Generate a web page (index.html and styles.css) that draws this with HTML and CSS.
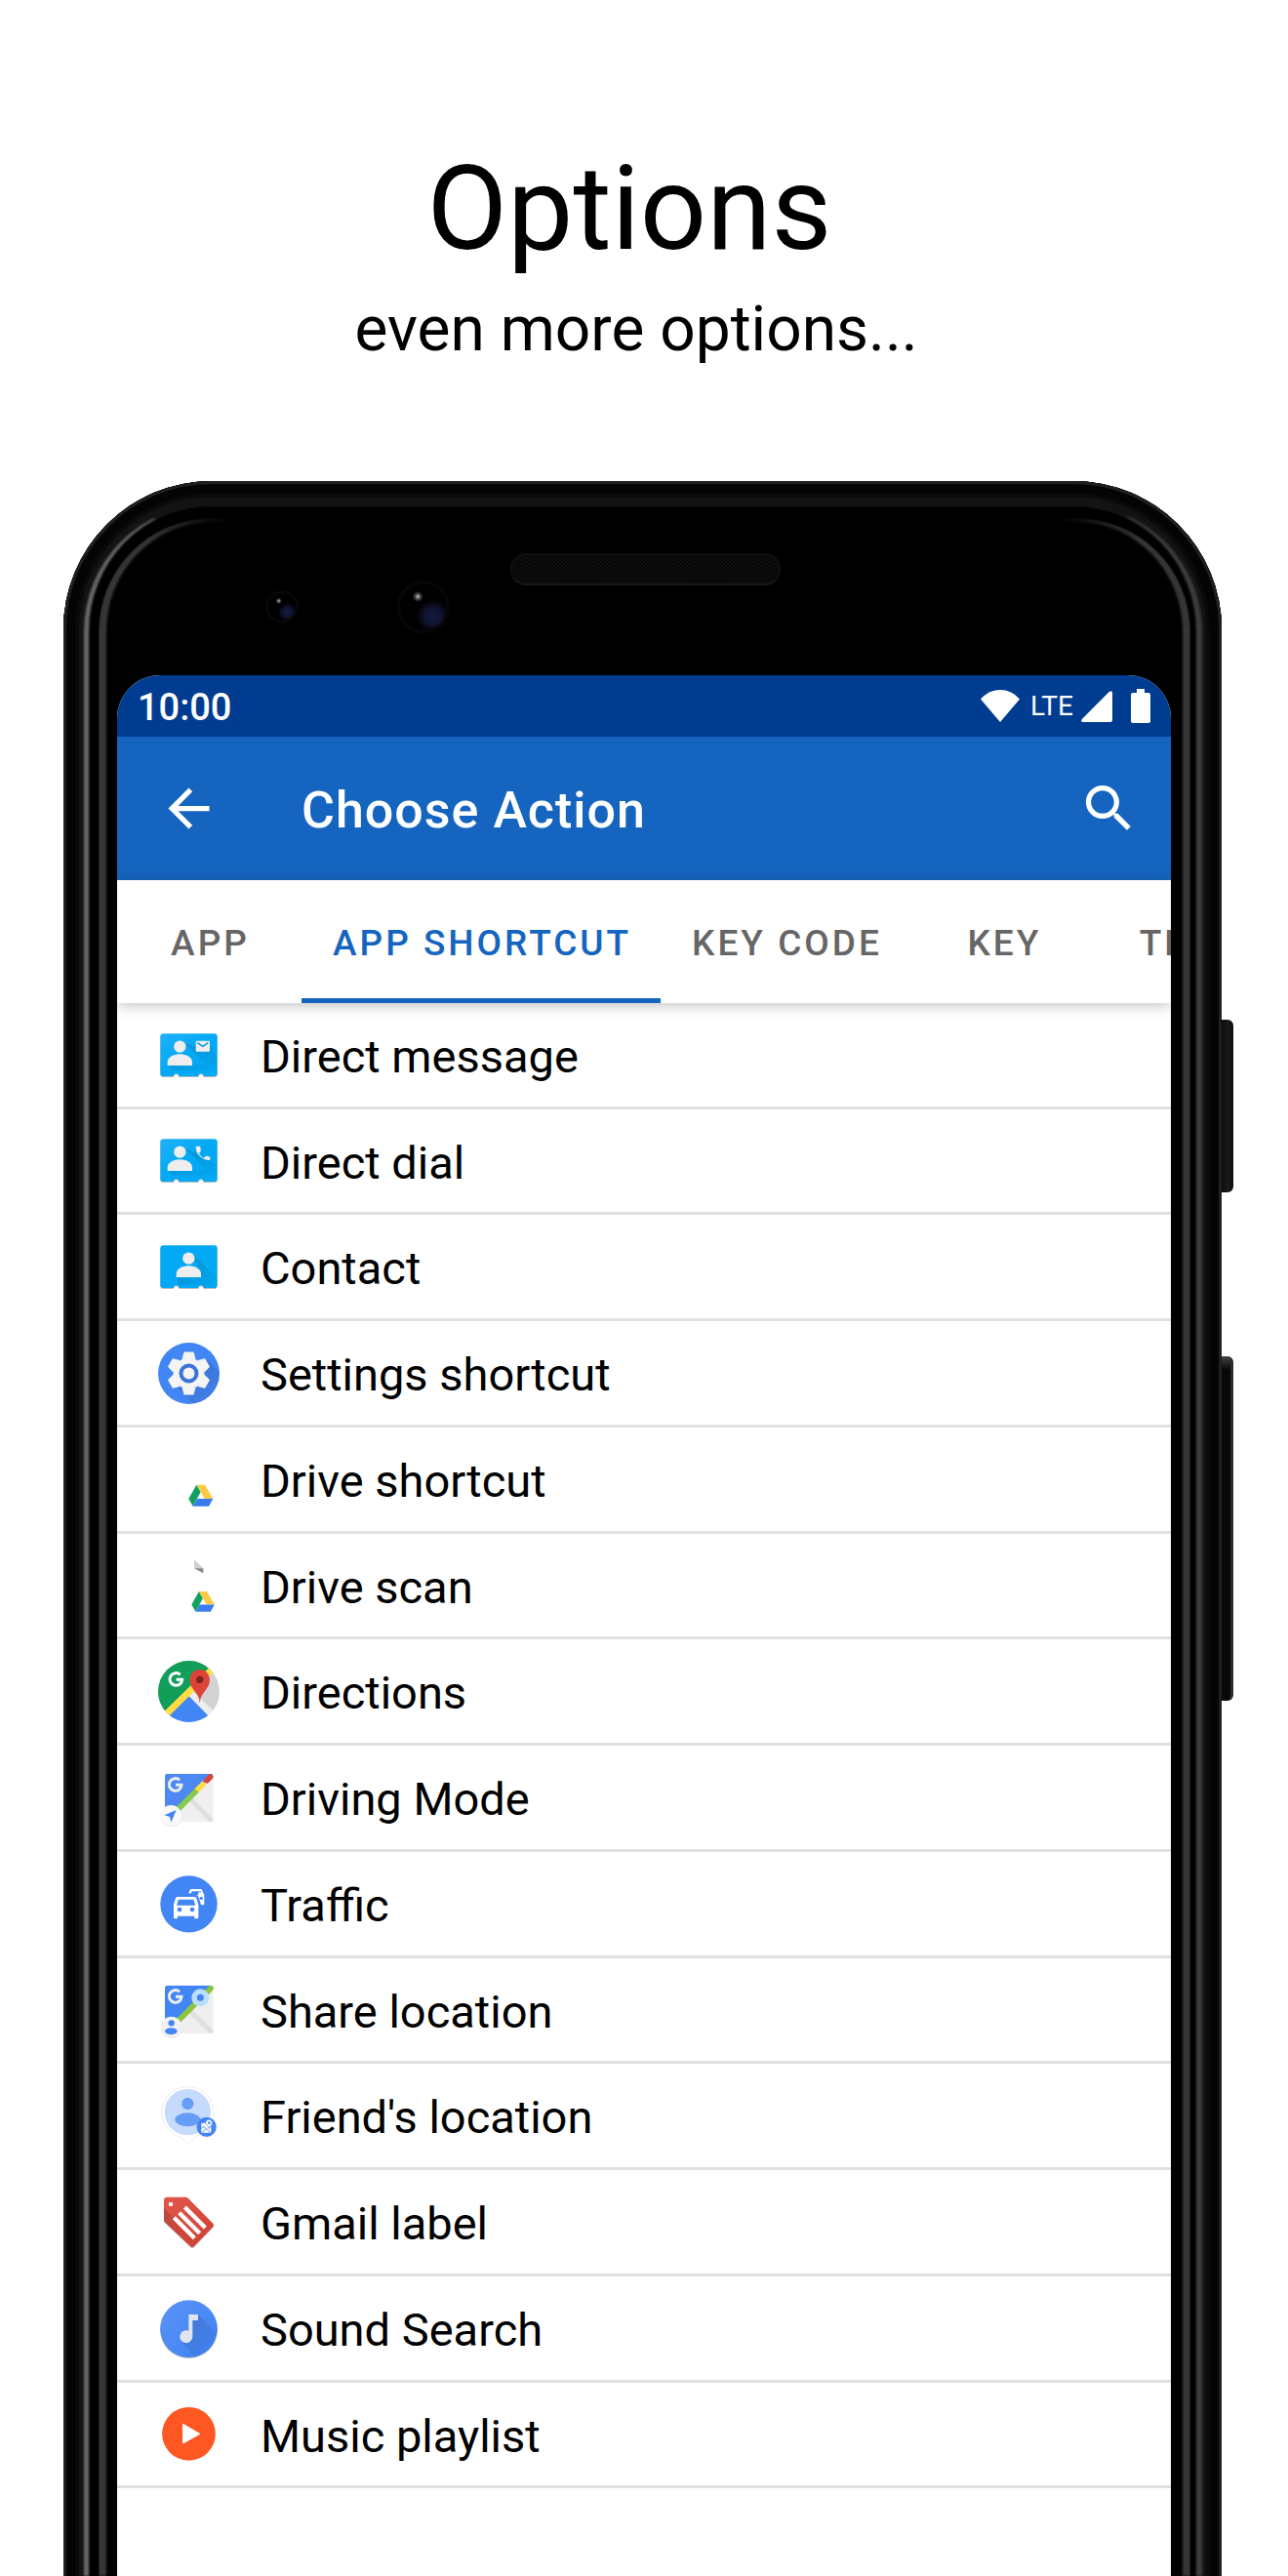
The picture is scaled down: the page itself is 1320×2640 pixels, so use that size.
FILE: index.html
```html
<!DOCTYPE html>
<html lang="en">
<head>
<meta charset="utf-8">
<meta name="viewport" content="width=device-width, initial-scale=1">
<title>Choose Action</title>
<link rel="stylesheet" href="styles.css">
</head>
<body>
<svg class="defs" aria-hidden="true">
  <defs>
    <linearGradient id="card" x1="0" y1="0" x2="1" y2="1"><stop offset="0" stop-color="#20b1f8"/><stop offset=".5" stop-color="#03a9f4"/></linearGradient>
    <linearGradient id="sound" x1="0" y1="0" x2="1" y2="1"><stop offset="0" stop-color="#5c94f8"/><stop offset="1" stop-color="#3d80f2"/></linearGradient>
    <linearGradient id="tag" x1="0" y1="0" x2="1" y2="1"><stop offset="0" stop-color="#e0594c"/><stop offset="1" stop-color="#d23f31"/></linearGradient>
    <linearGradient id="fade" x1="0" y1="0" x2="1" y2="1"><stop offset="0" stop-color="#000" stop-opacity=".16"/><stop offset="1" stop-color="#000" stop-opacity="0"/></linearGradient>
    <clipPath id="round"><circle cx="94.500" cy="94.500" r="94.500"/></clipPath>
    <clipPath id="square"><rect x="21" y="20" width="149" height="149" rx="9"/></clipPath>
    <path id="card-shape" d="M16 28H173q9 0 9 9V150q0 9-9 9H140a8 8 0 0 0-16 0H64a8 8 0 0 0-16 0H16q-9 0-9-9V37q0-9 9-9Z"/>
    <g id="person"><circle cx="0" cy="-36" r="18.500"/><path d="M-38 22V10C-36-6-16-13 0-13S36-6 38 10V22Z"/></g>
    <path id="g" d="M13-13A19 19 0 1 0 19 2H1" fill="none" stroke-width="9"/>
    <path id="tooth" d="M-21-44L-15-65Q-14-66-12-66H12Q14-66 15-65L21-44Z"/>
    <g id="drive"><path fill="#11a05e" d="M24 0L37 22L13 66L0 43Z"/><path fill="#fdca47" d="M24 0H50L75 43H49Z"/><path fill="#3a7cf0" d="M13 66L26 43H75L62 66Z"/></g>
  </defs>
</svg>

<header class="intro">
  <h1 class="intro-title">Options</h1>
  <p class="intro-text">even more options...</p>
</header>

<main class="phone">
  <span class="frame"></span>
  <span class="rim rim-outer"></span>
  <span class="rim rim-inner"></span>
  <span class="key key-power"></span>
  <span class="key key-volume"></span>

  <div class="bezel">
    <div class="cameras"><span class="camera camera-small"></span><span class="camera"></span></div>
    <span class="speaker"></span>
  </div>

  <div class="screen">
    <div class="status">
      <time class="clock">10:00</time>
      <div class="signals">
        <svg class="wifi" width="40" height="33" viewBox="0 0 40 33" fill="#fff" aria-hidden="true"><path d="M20 33L0 9.500Q8 0 20 0T40 9.500Z"/></svg>
        <span class="network">LTE</span>
        <svg class="bars" width="32" height="32" viewBox="0 0 32 32" fill="#fff" aria-hidden="true"><path d="M29 .8Q32-1 32 2V30Q32 32 30 32H2Q-1 32 .8 29Z"/></svg>
        <svg width="20" height="35" viewBox="0 0 20 35" fill="#fff" aria-hidden="true"><path d="M6 0H14V4H18Q20 4 20 6V33Q20 35 18 35H2Q0 35 0 33V6Q0 4 2 4H6Z"/></svg>
      </div>
    </div>

    <div class="appbar">
      <button class="icon-button" type="button" aria-label="Back"><svg viewBox="0 0 24 24" fill="#fff"><path d="M20 11H7.830l5.590-5.590L12 4l-8 8 8 8 1.410-1.410L7.830 13H20v-2z"/></svg></button>
      <h2 class="appbar-title">Choose Action</h2>
      <button class="icon-button" type="button" aria-label="Search"><svg viewBox="0 0 24 24" fill="#fff"><path d="M15.500 14h-.79l-.28-.27C15.410 12.590 16 11.110 16 9.500 16 5.910 13.090 3 9.500 3S3 5.910 3 9.500 5.910 16 9.500 16c1.610 0 3.090-.59 4.230-1.570l.27.28v.79l5 4.990L20.490 19l-4.990-5zm-6 0C7.010 14 5 11.990 5 9.500S7.010 5 9.500 5 14 7.010 14 9.500 11.990 14 9.500 14z"/></svg></button>
    </div>

    <nav class="tabs">
      <button class="tab" type="button">APP</button>
      <button class="tab tab-active" type="button">APP SHORTCUT</button>
      <button class="tab" type="button">KEY CODE</button>
      <button class="tab" type="button">KEY</button>
      <button class="tab" type="button">TEXT</button>
    </nav>

    <ul class="actions">
      <li class="action"><button class="row" type="button">
        <svg class="icon" viewBox="0 0 189 189" aria-hidden="true"><use href="#card-shape" y="3" fill="#bbb"/><use href="#card-shape" fill="url(#card)"/><path fill="url(#fade)" d="M82 56L150 124H30L45 140H150L182 145V110L158 60V83Z"/><use href="#person" x="67" y="104" fill="#eee"/><rect x="116" y="50" width="43" height="33" rx="3" fill="#eee"/><path d="M121 56L137.500 67L154 56" fill="none" stroke="#0a9be0" stroke-width="5"/></svg>
        <span class="label">Direct message</span></button></li>
      <li class="action"><button class="row" type="button">
        <svg class="icon" viewBox="0 0 189 189" aria-hidden="true"><use href="#card-shape" y="3" fill="#bbb"/><use href="#card-shape" fill="url(#card)"/><path fill="url(#fade)" d="M82 56L150 124H30L45 140H150L182 145V110L158 90Z"/><use href="#person" x="67" y="104" fill="#eee"/><path fill="#eee" d="M119 50H128Q130 50 130 52C130 57 131 60 132 63L131 66L126 71C130 78 135 83 141 86L146 81L149 80Q154 82 158 82Q160 82 160 84V91Q160 93 158 93C136 93 116 73 116 53Q116 50 119 50Z"/></svg>
        <span class="label">Direct dial</span></button></li>
      <li class="action"><button class="row" type="button">
        <svg class="icon" viewBox="0 0 189 189" aria-hidden="true"><use href="#card-shape" y="3" fill="#bbb"/><use href="#card-shape" fill="#03a9f4"/><path fill="url(#fade)" d="M108 56L182 130V159H140L124 151L64 151L58 126H132Z"/><use href="#person" x="94" y="104" fill="#eee"/></svg>
        <span class="label">Contact</span></button></li>
      <li class="action"><button class="row" type="button">
        <svg class="icon" viewBox="0 0 189 189" aria-hidden="true"><circle cx="94.500" cy="94.500" r="94.500" fill="#4285f4"/><g clip-path="url(#round)"><path fill="url(#fade)" d="M154 54L220 120V220H140L50 130Z"/></g><g transform="translate(94.500 94.500)" fill="#f4f4f4"><circle r="48"/><use href="#tooth"/><use href="#tooth" transform="rotate(60)"/><use href="#tooth" transform="rotate(120)"/><use href="#tooth" transform="rotate(180)"/><use href="#tooth" transform="rotate(240)"/><use href="#tooth" transform="rotate(300)"/><circle r="30" fill="#3b74d8"/><circle r="18"/></g></svg>
        <span class="label">Settings shortcut</span></button></li>
      <li class="action"><button class="row" type="button">
        <svg class="icon" viewBox="0 0 189 189" aria-hidden="true"><use href="#drive" x="94" y="110"/></svg>
        <span class="label">Drive shortcut</span></button></li>
      <li class="action"><button class="row" type="button">
        <svg class="icon" viewBox="0 0 189 189" aria-hidden="true"><path fill="#d0d0d0" d="M111 16L139 43H111Z"/><path fill="#888" d="M111 43H139V58Z"/><g transform="translate(103 114) scale(.94)"><use href="#drive"/></g></svg>
        <span class="label">Drive scan</span></button></li>
      <li class="action"><button class="row" type="button">
        <svg class="icon" viewBox="0 0 189 189" aria-hidden="true"><g clip-path="url(#round)"><path fill="#d2d2d2" d="M0 0H189V189H0Z"/><path fill="#129d58" d="M0 0H179L0 175Z"/><path fill="#eee" d="M88 102L101 88L180 163L165 180Z"/><path fill="#4285f4" d="M94 108L174 189H10Z"/><path fill="#ffdd40" d="M14 161L164 15L179 26L26 178Z"/></g><use href="#g" x="55" y="56" stroke="#fff"/><path fill="#db4437" d="M128 128C127 98 97 88 97 58A31 31 0 0 1 159 58C159 88 130 98 129 128Z"/><circle cx="128" cy="58" r="11" fill="#7b231d"/></svg>
        <span class="label">Directions</span></button></li>
      <li class="action"><button class="row" type="button">
        <svg class="icon" viewBox="0 0 189 189" aria-hidden="true"><g clip-path="url(#square)"><path fill="#efefef" d="M21 20H170V169H21Z"/><path fill="#4d88f3" d="M21 20H170L21 169Z"/><path stroke="#dfdfdf" stroke-width="15" d="M100 100L170 170"/></g><g fill="none" stroke-width="17"><path stroke="#db4437" stroke-linecap="round" d="M150 41L161 30"/><path stroke="#86ca4c" d="M50 141L121 70"/><path stroke="#ffdd40" d="M119 72L142 49"/></g><circle cx="40" cy="151" r="32" fill="#ddd"/><circle cx="40" cy="149" r="32" fill="#fafafa"/><path fill="#4285f4" d="M19 148L56 132L40 170L36 153Z"/><use href="#g" x="53" y="53" stroke="#eee"/></svg>
        <span class="label">Driving Mode</span></button></li>
      <li class="action"><button class="row" type="button">
        <svg class="icon" viewBox="0 0 189 189" aria-hidden="true"><circle cx="94.500" cy="94" r="87.500" fill="#4285f4"/><path fill="#fff" fill-rule="evenodd" d="M59 72H113Q116 72 118 76L124 96V136Q124 139 121 139H115Q112 139 112 136V131H60V136Q60 139 57 139H51Q48 139 48 136V96L54 76Q56 72 59 72ZM63 80L57 98H115L109 80ZM66 104a7 7 0 1 0 .1 0ZM105 104a7 7 0 1 0 .1 0Z"/><path fill="#fff" d="M94 61L98 51Q99 48 102 48H131Q134 48 135 51L142 67V94Q142 97 139 97H134Q131 97 131 94V92L124 71Q122 66 117 66H124V58H134L131 55H104L102 61Z"/><circle cx="133" cy="76" r="5" fill="#4285f4"/></svg>
        <span class="label">Traffic</span></button></li>
      <li class="action"><button class="row" type="button">
        <svg class="icon" viewBox="0 0 189 189" aria-hidden="true"><g clip-path="url(#square)"><path fill="#efefef" d="M21 20H170V169H21Z"/><path fill="#4285f4" d="M21 20H170L21 169Z"/><path stroke="#dfdfdf" stroke-width="15" d="M100 100L170 170"/></g><path fill="none" stroke="#8bc53f" stroke-width="17" d="M50 141L155 36"/><path stroke="#8bc53f" stroke-width="17" stroke-linecap="round" d="M150 41L162 29"/><circle cx="130" cy="58" r="27" fill="#bbdefb"/><circle cx="130" cy="58" r="10.500" fill="#4285f4"/><circle cx="41" cy="150" r="32" fill="#ddd"/><circle cx="41" cy="148" r="32" fill="#f1f1f1"/><circle cx="41" cy="136" r="9.500" fill="#4285f4"/><ellipse cx="40" cy="161" rx="19" ry="10" fill="#4285f4"/><use href="#g" x="53" y="53" stroke="#eee"/></svg>
        <span class="label">Share location</span></button></li>
      <li class="action"><button class="row" type="button">
        <svg class="icon" viewBox="0 0 189 189" aria-hidden="true"><path fill="#fff" stroke="#ededed" stroke-width="3" d="M91 180L70 160A79 79 0 1 1 112 160Z"/><circle cx="91" cy="83" r="71" fill="#c6dafc"/><circle cx="91" cy="57" r="18.500" fill="#669df6"/><ellipse cx="91" cy="106" rx="39" ry="21" fill="#669df6"/><circle cx="149" cy="130" r="30" fill="#ddd"/><circle cx="149" cy="128" r="30" fill="#4285f4"/><path fill="#fff" d="M136 116H147Q150 126 157 132L163 126V143Q163 146 160 146H136Q133 146 133 143V119Q133 116 136 116Z"/><path fill="none" stroke="#4285f4" stroke-width="3" d="M134 133L141 127L159 145M136 145L147 134"/><path fill="#fff" stroke="#4285f4" stroke-width="2" d="M157 134C156 125 146 124 146 116A10 10 0 0 1 167 116C167 124 158 125 157 134Z"/><circle cx="157" cy="116" r="4" fill="#4285f4"/></svg>
        <span class="label">Friend's location</span></button></li>
      <li class="action"><button class="row" type="button">
        <svg class="icon" viewBox="0 0 189 189" aria-hidden="true"><path fill="#bbb" d="M27 20H85Q89 20 92 23L169 101Q173 107 169 111L111 171Q105 177 99 171L21 97Q18 94 18 90V29Q18 20 27 20Z"/><path fill="url(#tag)" d="M27 17H85Q89 17 92 20L169 98Q173 104 169 108L111 168Q105 174 99 168L21 94Q18 91 18 87V26Q18 17 27 17Z"/><path fill="url(#fade)" d="M18 50L44 78L115 150L105 172L18 92Z"/><circle cx="39" cy="39" r="7" fill="#eee"/><path stroke="#fff" stroke-width="13" d="M82 48L145 111M65 65L128 128M49 80L112 143"/></svg>
        <span class="label">Gmail label</span></button></li>
      <li class="action"><button class="row" type="button">
        <svg class="icon" viewBox="0 0 189 189" aria-hidden="true"><circle cx="94.500" cy="98" r="88" fill="#bbb"/><circle cx="94.500" cy="95" r="88" fill="url(#sound)"/><path fill="url(#fade)" d="M123 51L178 106Q170 165 112 181L70 132L106 119V69H123Z"/><path fill="#dfe6f1" d="M94 51H123V69H106V119A19.500 19.500 0 1 1 94 101Z"/></svg>
        <span class="label">Sound Search</span></button></li>
      <li class="action"><button class="row" type="button">
        <svg class="icon" viewBox="0 0 189 189" aria-hidden="true"><circle cx="94.500" cy="94" r="82" fill="#ff5722"/><path fill="#fff" d="M75 65Q75 62 78 63L128 92Q130 94 128 96L78 124Q75 125 75 122Z"/></svg>
        <span class="label">Music playlist</span></button></li>
    </ul>
  </div>
</main>
</body>
</html>
```

FILE: styles.css
```css
* {
  box-sizing: border-box;
}

body {
  margin: 0;
  min-height: 100vh;
  display: flex;
  flex-direction: column;
  overflow-x: hidden;
  background: #fff;
  color: #000;
  font-family: Roboto, "Liberation Sans", sans-serif;
}

h1,
h2,
p,
ul {
  margin: 0;
  padding: 0;
  font-weight: 400;
}

button {
  margin: 0;
  padding: 0;
  border: 0;
  background: none;
  color: inherit;
  font: inherit;
}

svg {
  display: block;
}

.defs {
  position: absolute;
  width: 0;
  height: 0;
}

/* Heading above the device */

.intro {
  padding: 144px 0 117px;
  text-align: center;
}

.intro-title {
  padding-right: 30px;
  font-size: 120px;
  line-height: 140px;
}

.intro-text {
  margin-top: 16px;
  padding-right: 16px;
  font-size: 64px;
  line-height: 76px;
}

/* Device frame */

.phone {
  position: relative;
  flex: 1;
  display: flex;
  flex-direction: column;
  margin: 0 68px 0 65px;
  padding: 0 52px 0 55px;
}

.frame {
  position: absolute;
  inset: 0;
  overflow: hidden;
}

/* Runs past the bottom edge, so that the frame shows no lower side */
.frame::before {
  content: "";
  position: absolute;
  inset: 0 0 -30px;
  border-radius: 152px 152px 0 0;
  background: #000;
  box-shadow:
    inset 0 0 0 3px #1f2020,
    inset 0 0 0 12px #040404,
    inset 0 0 0 16px #0a0a0a,
    inset 0 0 0 26px #131313;
}

.rim {
  position: absolute;
  bottom: 0;
  border-style: solid;
  filter: blur(1px);
}

.rim-outer {
  top: 24px;
  left: 21px;
  right: 20px;
  border-width: 1px 6px 0 5px;
  border-color: #131313 #3c3c3c #131313 #686868;
  border-radius: 130px 130px 0 0;
}

.rim-inner {
  top: 38px;
  left: 36px;
  right: 32px;
  border-width: 4px 8px 0;
  border-color: #363636;
  border-radius: 116px 116px 0 0;
  -webkit-mask-image: linear-gradient(90deg, #000 50px, transparent 134px, transparent calc(100% - 134px), #000 calc(100% - 50px));
  mask-image: linear-gradient(90deg, #000 50px, transparent 134px, transparent calc(100% - 134px), #000 calc(100% - 50px));
}

.key {
  position: absolute;
  right: -12px;
  width: 12px;
  border-radius: 0 6px 6px 0;
  background: linear-gradient(90deg, #0c0c0c, #1a1a1a 50%, #0e0e0e);
}

.key-power {
  top: 552px;
  height: 177px;
}

.key-volume {
  top: 897px;
  height: 353px;
  border-right: 3px solid #2c2c2c;
  background: linear-gradient(#444, #080808 14px);
}

.bezel {
  position: relative;
  display: grid;
  grid-template-columns: 1fr auto 1fr;
  align-items: start;
  height: 199px;
  padding: 74px 0 0 3px;
}

.cameras {
  display: flex;
  justify-content: flex-end;
  align-items: center;
  gap: 101px;
  margin: 28px 62px 0 0;
}

.camera {
  width: 54px;
  height: 54px;
  border: 3px solid #070707;
  border-radius: 50%;
  background:
    radial-gradient(circle at 38% 28%, #ccc 0, #555 5%, transparent 12%),
    radial-gradient(circle at 70% 70%, #141a40 0, #10142f 18%, transparent 36%),
    #000;
}

.camera-small {
  width: 34px;
  height: 34px;
}

.speaker {
  width: 277px;
  height: 33px;
  border: 2px solid #101010;
  border-bottom-color: #181818;
  border-radius: 16px;
  background: repeating-conic-gradient(#050505 0 25%, #0f0f0f 0 50%) 0 0 / 4px 4px;
}

/* Screen */

.screen {
  position: relative;
  flex: 1;
  overflow: hidden;
  border-radius: 44px 44px 0 0;
  background: #fff;
}

.status {
  display: flex;
  align-items: center;
  justify-content: space-between;
  height: 63px;
  padding: 0 21px;
  background: #003c8f;
  color: #fff;
}

.clock {
  padding-top: 2px;
  font-size: 38px;
  font-weight: 500;
  line-height: 44px;
}

.signals {
  display: flex;
  align-items: center;
}

.network {
  margin: 0 8px 0 11px;
  font-size: 28px;
  line-height: 32px;
}

.bars {
  margin-right: 19px;
}

.appbar {
  display: flex;
  align-items: center;
  height: 147px;
  padding: 0 32px 0 42px;
  background: #1565c0;
  color: #fff;
}

.icon-button {
  width: 63px;
  height: 63px;
}

.appbar-title {
  flex: 1;
  margin-left: 84px;
  padding-top: 4px;
  font-size: 52px;
  font-weight: 500;
  line-height: 64px;
  letter-spacing: 1px;
}

.tabs {
  position: relative;
  display: flex;
  height: 126px;
  background: #fff;
  box-shadow: 0 2px 14px rgba(0, 0, 0, 0.25);
}

.tab {
  flex: none;
  min-width: 189px;
  padding: 7px 30px 0 32px;
  border-bottom: 5px solid transparent;
  color: #666;
  font-size: 37px;
  font-weight: 500;
  letter-spacing: 3px;
}

.tab-active {
  border-bottom-color: #1565c0;
  color: #1565c0;
}

.actions {
  list-style: none;
}

.action {
  height: 109px;
  border-bottom: 3px solid #e0e0e0;
}

.action:nth-child(4n + 2) {
  height: 108px;
}

.row {
  display: flex;
  align-items: center;
  gap: 42px;
  width: 100%;
  height: 100%;
  padding: 0 42px;
  text-align: left;
}

.icon {
  width: 63px;
  height: 63px;
  overflow: visible;
}

.label {
  padding-top: 4px;
  font-size: 47px;
  line-height: 56px;
}
```
